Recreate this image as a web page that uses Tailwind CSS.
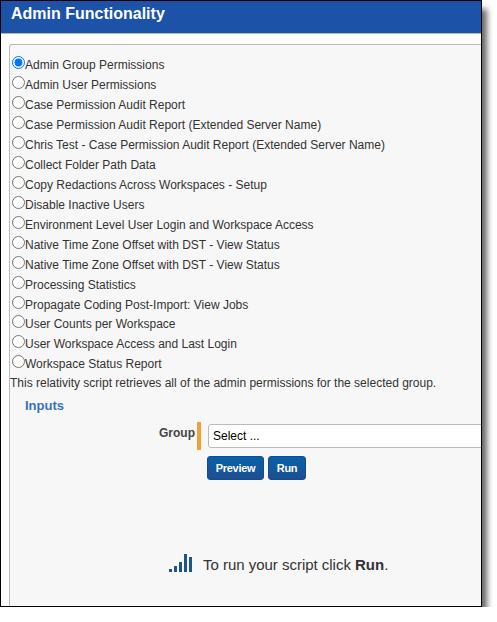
<!DOCTYPE html>
<html lang="en">
<head>
    <meta charset="UTF-8">
    <meta name="viewport" content="width=device-width, initial-scale=1.0">
    <title>Admin Functionality</title>
    <script src="https://cdn.jsdelivr.net/npm/@tailwindcss/browser@4"></script>
</head>
<body class="bg-white overflow-hidden font-['Liberation_Sans',Arial,sans-serif] text-xs text-[#333]">
    <div class="w-[482px] h-[607px] flex flex-col bg-white border border-black overflow-hidden shadow-[7px_7px_6px_-2px_rgba(0,0,0,0.6)]">
        <header class="h-[33px] shrink-0 bg-[#1c52a8] border-b border-[#bbb] pl-2.5">
            <h1 class="text-base leading-[25px] font-bold text-white whitespace-nowrap">Admin Functionality</h1>
        </header>

        <main class="flex-1 mt-2.5 ml-2 bg-[#f7f7f7] border-t border-l border-[#bbb] rounded-tl-[3px] whitespace-nowrap">
            <form>
                <ul id="scriptList" class="pt-[9px] pl-0.5"></ul>

                <p class="h-5 leading-5">This relativity script retrieves all of the admin permissions for the selected group.</p>

                <h2 class="mt-[3px] ml-[15px] h-5 leading-5 text-[13px] font-bold text-[#3d71b8]">Inputs</h2>

                <div class="mt-1.5 flex h-7">
                    <label for="group" class="w-[185px] shrink-0 pt-[3px] text-right text-xs leading-4 font-bold text-[#444]">Group</label>
                    <span class="ml-0.5 w-1 shrink-0 bg-[#f4a037]"></span>
                    <input id="group" type="text" value="Select ..." class="mt-0.5 ml-[7px] w-[290px] h-6 shrink-0 bg-white border border-[#bbb] rounded-[3px] px-1 text-xs text-black">
                </div>

                <div class="mt-1.5 ml-[197px] flex gap-1 text-[11px] tracking-[-0.3px] font-bold text-white">
                    <button type="button" class="w-[57px] h-6 bg-linear-to-b from-[#0560ac] to-[#1b4f91] border border-[#174a87] rounded-[3px]">Preview</button>
                    <button type="button" class="w-[38px] h-6 bg-linear-to-b from-[#0560ac] to-[#1b4f91] border border-[#174a87] rounded-[3px]">Run</button>
                </div>
            </form>

            <div class="mt-[74px] ml-[159px] flex text-[15px] leading-[22px]">
                <svg class="w-[23px] h-[18px]" viewBox="0 0 23 18" fill="#1d5293" shape-rendering="crispEdges">
                    <rect x="0" y="15" width="3" height="3" />
                    <rect x="5" y="12" width="3" height="6" />
                    <rect x="10" y="8" width="3" height="10" />
                    <rect x="15" y="0" width="3" height="18" />
                    <rect x="20" y="3" width="3" height="15" />
                </svg>
                <p class="ml-[11px] tracking-[-0.02px]">To run your script click <b>Run</b>.</p>
            </div>
        </main>
    </div>

    <script>
        const scripts = [
            'Admin Group Permissions',
            'Admin User Permissions',
            'Case Permission Audit Report',
            'Case Permission Audit Report (Extended Server Name)',
            'Chris Test - Case Permission Audit Report (Extended Server Name)',
            'Collect Folder Path Data',
            'Copy Redactions Across Workspaces - Setup',
            'Disable Inactive Users',
            'Environment Level User Login and Workspace Access',
            'Native Time Zone Offset with DST - View Status',
            'Native Time Zone Offset with DST - View Status',
            'Processing Statistics',
            'Propagate Coding Post-Import: View Jobs',
            'User Counts per Workspace',
            'User Workspace Access and Last Login',
            'Workspace Status Report'
        ];

        document.getElementById('scriptList').innerHTML = scripts.map((name, i) => `
            <li class="${i === 12 ? 'h-[19px]' : 'h-5'}">
                <label class="flex h-5">
                    <input type="radio" name="script" class="mt-0.5 w-[13px] h-[13px] shrink-0" ${i === 0 ? 'checked' : ''}>
                    <span class="leading-[22px]">${name}</span>
                </label>
            </li>
        `).join('');
    </script>
</body>
</html>
